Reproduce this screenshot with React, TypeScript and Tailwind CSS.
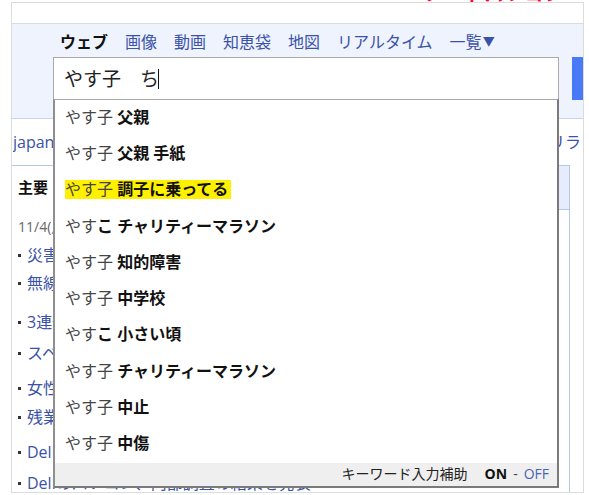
import React from "react";

const rows: { n: string; b: string; hl?: boolean }[] = [
  { n: "やす子 ", b: "父親" },
  { n: "やす子 ", b: "父親 手紙" },
  { n: "やす子 ", b: "調子に乗ってる", hl: true },
  { n: "やす", b: "こ チャリティーマラソン" },
  { n: "やす子 ", b: "知的障害" },
  { n: "やす子 ", b: "中学校" },
  { n: "やす", b: "こ 小さい頃" },
  { n: "やす子 ", b: "チャリティーマラソン" },
  { n: "やす子 ", b: "中止" },
  { n: "やす子 ", b: "中傷" },
];

const news: { t: string; mt: string }[] = [
  { t: "災害時の避難所運営に課題", mt: "mt-[8px]" },
  { t: "無線LANの脆弱性を公表", mt: "mt-[8px]" },
  { t: "3連休の渋滞予測を発表", mt: "mt-[19px]" },
  { t: "スペインで記録的な大雨", mt: "mt-[11px]" },
  { t: "女性議員の割合が過去最高", mt: "mt-[15px]" },
  { t: "残業規制で物流に影響も", mt: "mt-[9px]" },
  { t: "Dellが新型ノートPCを発表", mt: "mt-[15px]" },
];

export default function App() {
  return (
    <div className="relative w-[589px] h-[495px] overflow-hidden bg-white font-['Open_Sans','Noto_Sans_CJK_JP',sans-serif] text-[#333]">
      <div className="absolute left-[425px] top-[-17px] text-[18px] leading-[22px] font-bold text-[#ff0033] tracking-[2px] z-10">
        ノートパソコン
      </div>
      <div className="ml-[11px] mt-[2px] w-[573px] h-[491px] border border-[#dcdcdc] overflow-hidden flex flex-col">
        <div className="h-[21px] shrink-0 border-b border-[#d6dbe6] bg-white" />
        <div className="h-[95px] shrink-0 bg-[#eef3fd] border-b border-[#c6d4f1]">
          <div className="pt-[8px] pl-[48px] flex gap-[17px] text-[16px] leading-[20px] text-[#3a52a8]">
            <span className="font-bold text-[#111]">ウェブ</span>
            <span>画像</span>
            <span>動画</span>
            <span>知恵袋</span>
            <span>地図</span>
            <span>リアルタイム</span>
            <span className="flex items-center">
              一覧<span className="text-[12px] ml-[1px]">▼</span>
            </span>
          </div>
          <div className="mt-[5px] flex">
            <div className="ml-[41px] w-[506px] h-[43px] shrink-0 border border-[#a9a9a9] bg-white flex items-center pl-[10px] text-[19px] leading-[24px] text-[#222]">
              <span>やす子　ち</span>
              <span className="w-px h-[20px] bg-[#111] -ml-[1px]" />
            </div>
            <div className="ml-[13px] w-[11px] h-[43px] shrink-0 bg-[#4879f6]" />
          </div>
        </div>
        <div className="flex-1">
          <div className="pt-[13px] pl-[1px] pr-[2px] flex justify-between text-[16px] leading-[20px] text-[#3a52a8]">
            <span className="w-[42px] overflow-hidden whitespace-nowrap">japanese</span>
            <span>リラ</span>
          </div>
          <div className="mt-[13px] w-[558px] border-t border-r border-[#b6c7ea]">
            <div className="h-[44px] flex">
              <div className="w-[60px] pl-[6px] pt-[11px] text-[15px] leading-[20px] font-bold text-[#111] border-r border-[#b6c7ea]">
                主要
              </div>
              <div className="flex-1 bg-[#e6ecfc] border-b border-[#b6c7ea]" />
            </div>
            <div className="pl-[6px]">
              <div className="mt-[7px] w-[37px] overflow-hidden whitespace-nowrap text-[14px] leading-[20px] text-[#666]">11/4(月) 12:00更新</div>
              {news.map((n, i) => (
                <div key={i} className={`${n.mt} w-[37px] overflow-hidden whitespace-nowrap flex items-center text-[16px] leading-[20px] text-[#3a52a8]`}>
                  <span className="w-[3px] h-[3px] shrink-0 bg-[#333] mr-[6px]" />
                  <span>{n.t}</span>
                </div>
              ))}
              <div className="mt-[11px] flex items-center text-[16px] leading-[20px] text-[#3a52a8]">
                <span className="w-[3px] h-[3px] bg-[#333] mr-[6px]" />
                <span>Dellのパソコン、内部調査の結果を発表</span>
                <span className="ml-[6px] text-[13px] text-[#8196d0]">⇒ 881</span>
              </div>
            </div>
          </div>
        </div>
      </div>

      <div className="absolute left-[53px] top-[99px] w-[506px] h-[389px] bg-white border-t border-[#a9a9a9] border-l-2 border-r-2 border-b-2 border-l-[#8f8f8f] border-r-[#7a7a7a] border-b-[#7a7a7a] flex flex-col">
        {rows.map((r, i) => (
          <div key={i} className="h-[36.3px] shrink-0 flex items-center pl-[10px] pb-[3px] text-[16px] leading-[20px]">
            <span className={r.hl ? "bg-[#fff000] leading-[19px] pr-[3px]" : ""}>
              <span className="text-[#444]">{r.n}</span>
              <span className="font-bold text-[#111]">{r.b}</span>
            </span>
          </div>
        ))}
        <div className="h-[23px] shrink-0 bg-[#efefef] flex items-center justify-end pr-[8px] text-[14px] leading-[18px] text-[#222]">
          <span>キーワード入力補助</span>
          <span className="ml-[17px] font-bold text-[#111]">ON</span>
          <span className="mx-[6px] text-[#444]">-</span>
          <span className="text-[#4a63b4]">OFF</span>
        </div>
      </div>
    </div>
  );
}
